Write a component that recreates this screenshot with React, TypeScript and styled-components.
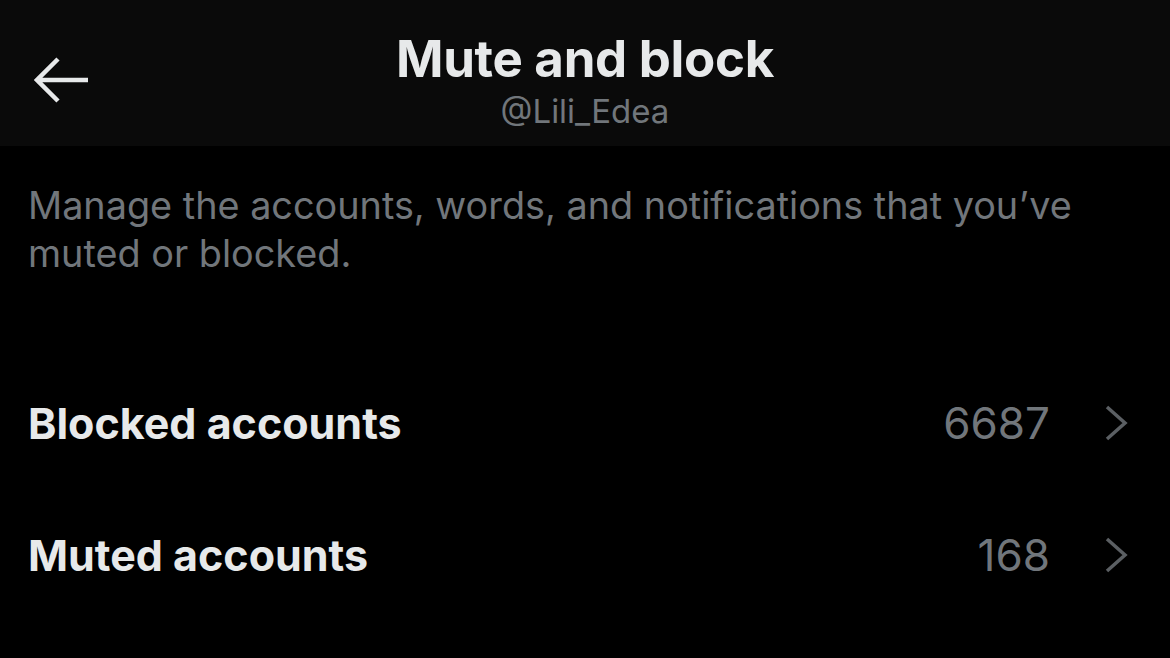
import styled, { createGlobalStyle } from "styled-components";

const GlobalStyle = createGlobalStyle`
  html, body {
    margin: 0;
    padding: 0;
    background: #000;
  }
  body {
    font-family: Inter, "Noto Sans", sans-serif;
    -webkit-font-smoothing: antialiased;
  }
`;

const Page = styled.div`
  width: 1170px;
  height: 658px;
  background: #000;
  color: #e7e9ea;
  overflow: hidden;
`;

const Header = styled.header`
  height: 146px;
  background: #0a0a0a;
  display: grid;
  grid-template-columns: 120px 1fr 120px;
  align-items: center;
`;

const BackButton = styled.button`
  background: none;
  border: none;
  padding: 0 0 0 34px;
  margin-top: 14px;
  display: flex;
  align-items: center;
  cursor: pointer;
`;

const TitleBlock = styled.div`
  display: flex;
  flex-direction: column;
  align-items: center;
  margin-top: 20px;
`;

const Title = styled.h1`
  margin: 0;
  font-size: 51px;
  font-weight: 700;
  line-height: 56px;
  color: #e7e9ea;
  letter-spacing: -0.3px;
`;

const Handle = styled.span`
  font-size: 33px;
  line-height: 48px;
  color: #71767b;
`;

const Description = styled.p`
  margin: 0;
  max-width: 1090px;
  padding: 35px 28px 0;
  font-size: 37.8px;
  line-height: 48px;
  color: #71767b;
`;

const List = styled.div`
  margin-top: 80px;
  display: flex;
  flex-direction: column;
`;

const Row = styled.div`
  height: 132px;
  display: flex;
  align-items: center;
  padding: 0 42px 0 28px;
`;

const Label = styled.span`
  flex: 1;
  font-size: 43px;
  font-weight: 700;
  color: #e7e9ea;
`;

const Count = styled.span`
  font-size: 44px;
  color: #71767b;
  margin-right: 54px;
`;

const Chevron = () => (
  <svg width="24" height="36" viewBox="0 0 24 36" fill="none">
    <path d="M3 2 L21 18 L3 34" stroke="#5b5f63" strokeWidth="3.5" />
  </svg>
);

const BackArrow = () => (
  <svg width="56" height="46" viewBox="0 0 56 46" fill="none">
    <path d="M24 2 L3 23 L24 44 M3 23 H54" stroke="#e7e9ea" strokeWidth="4.5" />
  </svg>
);

const rows = [
  { label: "Blocked accounts", count: 6687 },
  { label: "Muted accounts", count: 168 },
];

export default function App() {
  return (
    <Page>
      <GlobalStyle />
      <Header>
        <BackButton aria-label="Back">
          <BackArrow />
        </BackButton>
        <TitleBlock>
          <Title>Mute and block</Title>
          <Handle>@Lili_Edea</Handle>
        </TitleBlock>
      </Header>
      <Description>
        Manage the accounts, words, and notifications that you’ve muted or
        blocked.
      </Description>
      <List>
        {rows.map((r) => (
          <Row key={r.label}>
            <Label>{r.label}</Label>
            <Count>{r.count}</Count>
            <Chevron />
          </Row>
        ))}
      </List>
    </Page>
  );
}
